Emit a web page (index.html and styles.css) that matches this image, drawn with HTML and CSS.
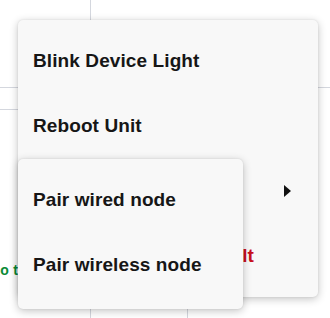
FILE: index.html
```html
<!DOCTYPE html>
<html lang="en">
<head>
<meta charset="utf-8">
<title>Device menu</title>
<link rel="stylesheet" href="styles.css">
</head>
<body>
<div class="page">
  <div class="bg">
    <div class="cell c-a"></div>
    <div class="cell c-b"></div>
    <div class="cell c-c"></div>
    <div class="cell c-d"></div>
    <div class="cell c-e"></div>
    <div class="cell c-f"></div>
    <div class="cell c-g"><span class="link">Go to the</span></div>
    <div class="cell c-h"></div>
    <div class="cell c-i"></div>
  </div>

  <div class="menu">
    <div class="item">Blink Device Light</div>
    <div class="item">Reboot Unit</div>
    <div class="item has-sub">Pair Node <span class="arrow"></span></div>
    <div class="item danger">Reset to Factory Default</div>
  </div>

  <div class="menu submenu">
    <div class="item">Pair wired node</div>
    <div class="item">Pair wireless node</div>
  </div>
</div>
</body>
</html>
```

FILE: styles.css
```css
html, body {
  margin: 0;
  padding: 0;
  background: #ffffff;
}

body {
  font-family: "Liberation Sans", Arial, sans-serif;
  color: #161616;
  width: 330px;
  height: 318px;
  overflow: hidden;
}

.page {
  position: relative;
  width: 330px;
  height: 318px;
  overflow: hidden;
}

.bg {
  display: grid;
  grid-template-columns: 91px 97px 142px;
  grid-template-rows: 88px 22px 208px;
  width: 330px;
  height: 318px;
}

.cell {
  box-sizing: border-box;
}

.c-a { border-right: 1px solid #d4d7de; border-bottom: 1px solid #d4d7de; }
.c-b { border-bottom: 1px solid #d4d7de; }
.c-c { border-bottom: 1px solid #d4d7de; }
.c-d { border-right: 1px solid #d4d7de; border-bottom: 1px solid #d4d7de; }
.c-e { border-right: 1px solid #d4d7de; border-bottom: 1px solid #d4d7de; }
.c-g {
  border-right: 1px solid #d4d7de;
  display: flex;
  align-items: flex-start;
  padding-top: 152px;
}
.c-h { border-right: 1px solid #d4d7de; }

.link {
  color: #0a8a36;
  font-weight: bold;
  font-size: 14px;
  margin-left: -11px;
  letter-spacing: 0.3px;
  white-space: nowrap;
}

.menu {
  position: absolute;
  left: 18px;
  top: 20px;
  width: 300px;
  box-sizing: border-box;
  padding: 8px 0 9px;
  background: #f8f8f8;
  border-radius: 5px;
  box-shadow: 0 2px 9px rgba(0, 0, 0, 0.24), 0 0 2px rgba(0, 0, 0, 0.1);
}

.submenu {
  top: 159px;
  width: 225px;
  padding: 8px 0 12px;
}

.item {
  height: 65px;
  display: flex;
  align-items: center;
  padding-left: 15px;
  padding-right: 27px;
  font-size: 19px;
  font-weight: bold;
  letter-spacing: 0.1px;
  white-space: nowrap;
}

.has-sub {
  justify-content: space-between;
}

.arrow {
  width: 0;
  height: 0;
  border-left: 7px solid #111111;
  border-top: 6px solid transparent;
  border-bottom: 6px solid transparent;
}

.danger {
  color: #c8101e;
}
```
